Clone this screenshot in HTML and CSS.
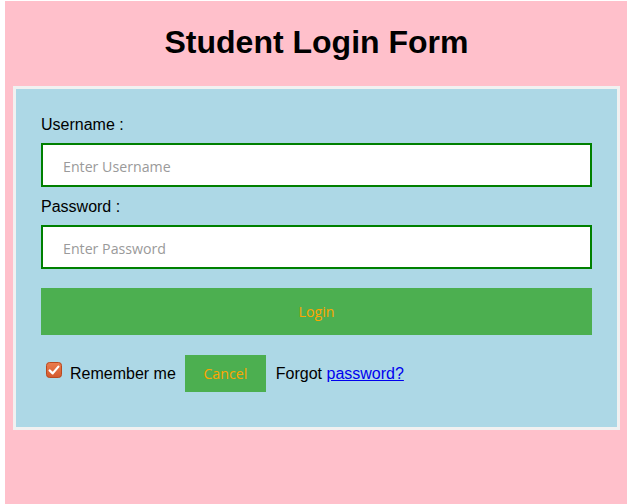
FILE: index.html
```html
<!DOCTYPE html>
<html lang="en">
<head>
<meta charset="utf-8">
<title>Student Login Form</title>
<link rel="stylesheet" href="styles.css">
</head>
<body>
<h1 class="title">Student Login Form</h1>
<form class="login-form">
  <div class="container">
    <label class="field-label" for="username">Username :</label>
    <input class="field" id="username" type="text" placeholder="Enter Username" name="username">
    <label class="field-label second" for="password">Password :</label>
    <input class="field" id="password" type="password" placeholder="Enter Password" name="password">
    <button class="login-btn" type="button">Login</button>
    <div class="extras">
      <span class="check" aria-hidden="true">
        <svg width="16" height="16" viewBox="0 0 16 16">
          <defs>
            <linearGradient id="cg" x1="0" y1="0" x2="0" y2="1">
              <stop offset="0" stop-color="#ea7d4e"/>
              <stop offset="1" stop-color="#d4582c"/>
            </linearGradient>
          </defs>
          <rect x="0.5" y="0.5" width="15" height="15" rx="3" ry="3" fill="url(#cg)" stroke="#b9491f"/>
          <path d="M3.6 8.4 L6.7 11.4 L12.4 4.6" fill="none" stroke="#ffffff" stroke-width="2.2" stroke-linecap="round" stroke-linejoin="round"/>
        </svg>
      </span>
      <span class="remember">Remember me</span>
      <button class="cancel-btn" type="button">Cancel</button>
      <span class="forgot">Forgot <a href="#">password?</a></span>
    </div>
  </div>
</form>
</body>
</html>
```

FILE: styles.css
```css
html {
  background: #ffffff;
}
body {
  margin: 1px 6px 0 5px;
  padding: 0 7px 0 8px;
  min-height: 520px;
  background: #ffc0cb;
  font-family: "Liberation Sans", Arial, Helvetica, sans-serif;
  color: #000;
}
.title {
  margin: 0 0 26px;
  padding-top: 23px;
  font-size: 32px;
  line-height: 36px;
  font-weight: bold;
  text-align: center;
}
.login-form {
  margin: 0;
  border: 3px solid #f1f1f1;
}
.container {
  background: #add8e6;
  padding: 25px 25px 35px;
}
.field-label {
  display: block;
  margin-top: 2px;
  font-size: 16px;
  line-height: 18px;
}
.field-label.second {
  margin-top: 11px;
}
.field {
  display: block;
  width: 100%;
  height: 44px;
  margin: 9px 0 0;
  padding: 2px 20px 0;
  border: 2px solid #008000;
  box-sizing: border-box;
  background: #fff;
  font-family: "Open Sans", "Noto Sans", sans-serif;
  font-size: 14.2px;
  color: #000;
  outline: none;
}
.field::placeholder {
  color: #9a9a9a;
}
.login-btn {
  display: block;
  width: 100%;
  height: 47px;
  margin: 19px 0 0;
  padding: 0;
  border: none;
  background: #4caf50;
  color: orange;
  font-family: "Open Sans", "Noto Sans", sans-serif;
  font-size: 14.2px;
  line-height: 17px;
}
.extras {
  display: flex;
  align-items: flex-start;
  margin-top: 20px;
  font-size: 16px;
  line-height: 18px;
}
.check {
  display: block;
  width: 16px;
  height: 16px;
  margin: 7px 0 0 5px;
}
.check svg {
  display: block;
}
.remember {
  margin: 10px 0 0 8px;
}
.cancel-btn {
  width: 81px;
  height: 37px;
  margin: 0 0 0 9px;
  padding: 0;
  border: none;
  background: #4caf50;
  color: orange;
  font-family: "Open Sans", "Noto Sans", sans-serif;
  font-size: 14.2px;
  line-height: 17px;
}
.forgot {
  margin: 10px 0 0 10px;
}
.forgot a {
  color: #0000ee;
  text-decoration: underline;
}
```
